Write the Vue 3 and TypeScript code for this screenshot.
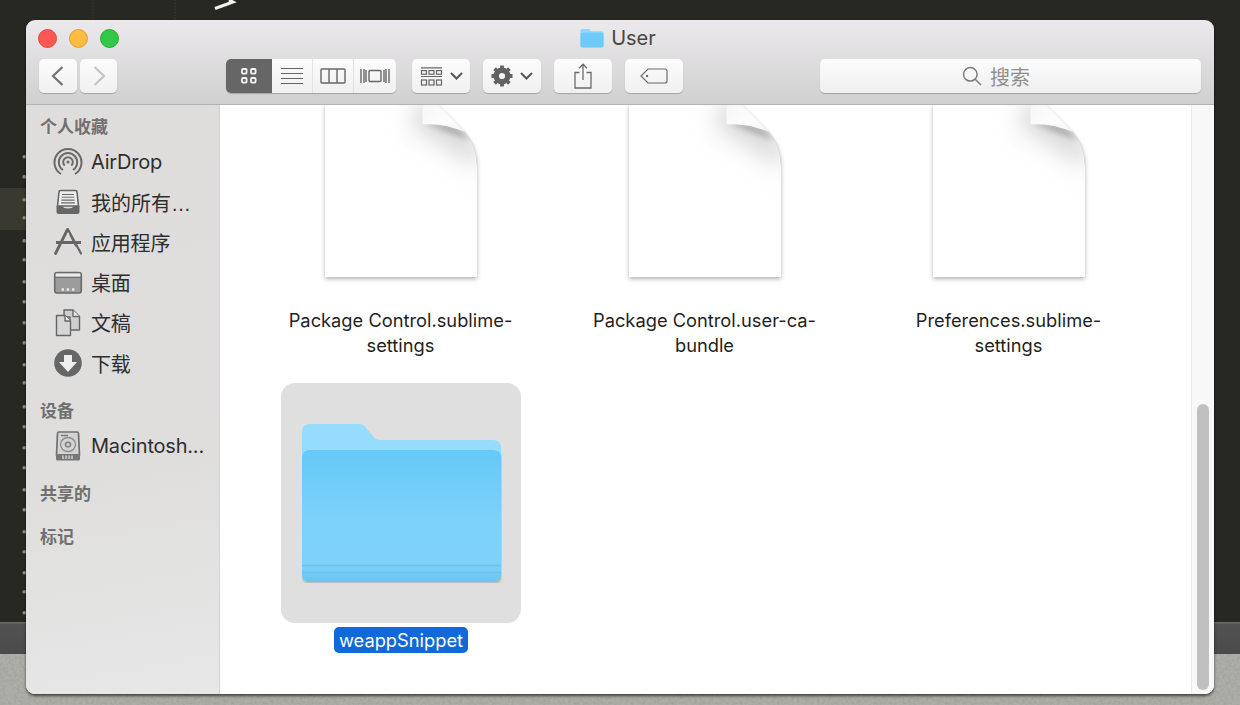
<script setup lang="ts">
const marks: number[] = [157,177,200,218,241,260,282,302,323,343,365,383,407,427,448,468,490,510,532,552,573,592,613]
const files: string[][] = [
  ['Package Control.sublime-', 'settings'],
  ['Package Control.user-ca-', 'bundle'],
  ['Preferences.sublime-', 'settings'],
]
</script>

<template>
  <div class="desktop">
    <div class="editor">
      <svg class="editor-art" width="300" height="622" viewBox="0 0 300 622">
        <rect x="0" y="188" width="26" height="42" fill="#39392f" />
        <path d="M93 0V20M175 0V20" stroke="#3e3e38" stroke-width="1" stroke-dasharray="1 2" />
        <path d="M215 8.500L233 2L229 0" fill="none" stroke="#f2f2ee" stroke-width="3" />
        <rect v-for="m in marks" :key="m" x="22.5" :y="m - 2" width="3.500" height="3.500" rx="1.500" fill="#8c8c86" />
      </svg>
    </div>
    <div class="band"></div>
    <div class="ground">
      <svg width="1240" height="51" viewBox="0 0 1240 51">
        <filter id="grain">
          <feTurbulence type="fractalNoise" baseFrequency="0.35" numOctaves="3" seed="4" />
          <feColorMatrix type="matrix" values="0 0 0 0 0.3  0 0 0 0 0.3  0 0 0 0 0.28  0 0 0 0.9 -0.3" />
        </filter>
        <rect width="1240" height="51" filter="url(#grain)" />
      </svg>
    </div>

    <div class="window">
      <header class="toolbar">
        <div class="titlebar">
          <div class="lights">
            <span class="light red"></span>
            <span class="light yellow"></span>
            <span class="light green"></span>
          </div>
          <div class="title">
            <svg width="24" height="20" viewBox="0 0 24 20">
              <path d="M0.500 2.500Q0.500 1 2 1H8.500Q9.500 1 10 2L11 3.300H22Q23.500 3.300 23.500 4.800V18Q23.500 19.500 22 19.500H2Q0.500 19.500 0.500 18Z" fill="#8fd8fd" />
              <path d="M0.500 6Q0.500 4.700 2 4.700H22Q23.500 4.700 23.500 6V18Q23.500 19.500 22 19.500H2Q0.500 19.500 0.500 18Z" fill="#6dcbf7" />
            </svg>
            <span>User</span>
          </div>
        </div>
        <div class="tools">
          <div class="btn back">
            <svg width="16" height="22" viewBox="0 0 16 22"><path d="M12.500 2L3 11L12.500 20" fill="none" stroke="#707070" stroke-width="2.200" /></svg>
          </div>
          <div class="btn forward">
            <svg width="16" height="22" viewBox="0 0 16 22"><path d="M3.500 2L13 11L3.500 20" fill="none" stroke="#c4c4c4" stroke-width="2.200" /></svg>
          </div>
          <div class="btn views">
            <div class="view active">
              <svg width="18" height="18" viewBox="0 0 18 18" fill="none" stroke="#f4f4f4" stroke-width="1.800">
                <rect x="2" y="2" width="4.600" height="4.600" rx="1" /><rect x="11" y="2" width="4.600" height="4.600" rx="1" />
                <rect x="2" y="11" width="4.600" height="4.600" rx="1" /><rect x="11" y="11" width="4.600" height="4.600" rx="1" />
              </svg>
            </div>
            <div class="view w41">
              <svg width="24" height="18" viewBox="0 0 24 18" stroke="#666" stroke-width="1.200"><path d="M1 1.500H23M1 6.500H23M1 11.500H23M1 16.500H23" /></svg>
            </div>
            <div class="view w41">
              <svg width="26" height="16" viewBox="0 0 26 16" fill="none" stroke="#666" stroke-width="1.400"><rect x="1" y="1" width="24" height="14" rx="1" /><path d="M9 1V15M17 1V15" /></svg>
            </div>
            <div class="view w42">
              <svg width="30" height="16" viewBox="0 0 30 16" fill="none" stroke="#666" stroke-width="1.400"><rect x="9" y="2.500" width="12" height="11" rx="1" /><path d="M1 1V15M4 1V15M26 1V15M29 1V15M6 2V14M24 2V14" /></svg>
            </div>
          </div>
          <div class="btn action arrange">
            <svg width="23" height="19" viewBox="0 0 23 19" fill="none" stroke="#666" stroke-width="1.200">
              <path d="M1 0.800H22M1 9.500H22" />
              <rect x="1.500" y="3.600" width="5" height="3.600" /><rect x="9" y="3.600" width="5" height="3.600" /><rect x="16.500" y="3.600" width="5" height="3.600" />
              <rect x="1.500" y="13" width="5" height="5" /><rect x="9" y="13" width="5" height="5" /><rect x="16.500" y="13" width="5" height="5" />
            </svg>
            <svg class="chev" width="13" height="8" viewBox="0 0 13 8"><path d="M1 1L6.500 6.500L12 1" fill="none" stroke="#555" stroke-width="2" /></svg>
          </div>
          <div class="btn action gear">
            <svg width="22" height="22" viewBox="0 0 22 22">
              <circle cx="11" cy="11" r="5.800" fill="none" stroke="#626262" stroke-width="5.400" />
              <g stroke="#626262" stroke-width="3.800">
                <path d="M11 0.500V4M11 18V21.500M0.500 11H4M18 11H21.500M3.600 3.600L6 6M16 16L18.400 18.400M18.400 3.600L16 6M6 16L3.600 18.400" />
              </g>
            </svg>
            <svg class="chev" width="13" height="8" viewBox="0 0 13 8"><path d="M1 1L6.500 6.500L12 1" fill="none" stroke="#555" stroke-width="2" /></svg>
          </div>
          <div class="btn action">
            <svg width="18" height="26" viewBox="0 0 18 26" fill="none" stroke="#6a6a6a" stroke-width="1.300">
              <path d="M5.500 9.500H1V25H17V9.500H12.500M9 17V1.500M5 5.200L9 1.200L13 5.200" />
            </svg>
          </div>
          <div class="btn action">
            <svg width="28" height="16" viewBox="0 0 28 16" fill="none" stroke="#6a6a6a" stroke-width="1.200">
              <path d="M8 1H25Q27 1 27 3V13Q27 15 25 15H8L1 8Z" /><circle cx="7" cy="8" r="1.200" fill="#6a6a6a" stroke="none" />
            </svg>
          </div>
          <div class="search">
            <svg width="20" height="20" viewBox="0 0 20 20" fill="none" stroke="#7c7c7c" stroke-width="1.500">
              <circle cx="8.300" cy="8.300" r="6.800" /><path d="M13.200 13.200L19 19" />
            </svg>
            <span>搜索</span>
          </div>
        </div>
      </header>

      <div class="body">
        <aside class="sidebar">
          <section class="group">
            <h3>个人收藏</h3>
            <div class="row">
              <svg class="ico" width="30" height="30" viewBox="0 0 30 30" fill="none" stroke="#6b6b6b" stroke-width="2">
                <path d="M8 27A13.500 13.500 0 1 1 22 27" />
                <path d="M10 23A9.200 9.200 0 1 1 20 23" />
                <path d="M11.800 18.600A4.800 4.800 0 1 1 18.200 18.600" />
                <circle cx="15" cy="15" r="1.600" fill="#6b6b6b" stroke="none" />
              </svg>
              <span>AirDrop</span>
            </div>
            <div class="row">
              <svg class="ico" width="30" height="30" viewBox="0 0 30 30">
                <path d="M6 5Q6 3.500 7.500 3.500H22.500Q24 3.500 24 5L25.500 19H4.500Z" fill="#ececec" stroke="#666" stroke-width="1.600" />
                <path d="M9 7.500H21M8.700 10.300H21.300M8.400 13.100H21.600M8 15.900H22" stroke="#6c6c6c" stroke-width="1.100" />
                <path d="M3.500 19H9.500Q10 21.500 15 21.500Q20 21.500 20.500 19H26.500V25Q26.500 27 24.500 27H5.500Q3.500 27 3.500 25Z" fill="#666" />
              </svg>
              <span class="ell">我的所有…</span>
            </div>
            <div class="row">
              <svg class="ico" width="30" height="30" viewBox="0 0 30 30" fill="none" stroke="#666" stroke-linecap="round">
                <path d="M15 2.500L28 26.500" stroke-width="2.200" />
                <path d="M14.500 2.500L2.500 26.500" stroke-width="2.800" />
                <path d="M15 2.500L10 12" stroke-width="1.400" />
                <path d="M3 15.500H28" stroke-width="3.200" stroke-linecap="butt" />
                <path d="M17 8L22.500 19" stroke-width="1.200" />
              </svg>
              <span>应用程序</span>
            </div>
            <div class="row">
              <svg class="ico" width="30" height="30" viewBox="0 0 30 30">
                <rect x="1.700" y="4.500" width="26.600" height="20.500" rx="2.500" fill="#9b9b9b" stroke="#6a6a6a" stroke-width="1.600" />
                <path d="M2.700 5.500H27.300V9H2.700Z" fill="#eaeaea" />
                <path d="M2 9.300H28" stroke="#6a6a6a" stroke-width="1.200" />
                <path d="M8.500 21.500H11M13.700 21.500H16.200M18.900 21.500H21.400" stroke="#e8e8e8" stroke-width="2.600" />
              </svg>
              <span>桌面</span>
            </div>
            <div class="row">
              <svg class="ico" width="30" height="30" viewBox="0 0 30 30" stroke="#666" stroke-width="1.400" stroke-linejoin="round">
                <path d="M11 2H20L26.500 8.500V22H17V9H11Z" fill="#cfcfcf" />
                <path d="M20 2V8.500H26.500" fill="#e8e8e8" />
                <path d="M3.500 7.500H12L17.500 13V27.500H3.500Z" fill="#d6d6d6" />
                <path d="M12 7.500V13H17.500" fill="#ececec" />
              </svg>
              <span>文稿</span>
            </div>
            <div class="row">
              <svg class="ico" width="30" height="30" viewBox="0 0 30 30">
                <circle cx="15" cy="15" r="13.800" fill="#666" />
                <path d="M11 7H19V14H24L15 24L6 14H11Z" fill="#efefef" />
              </svg>
              <span>下载</span>
            </div>
          </section>
          <section class="group">
            <h3>设备</h3>
            <div class="row">
              <svg class="ico" width="30" height="30" viewBox="0 0 30 30">
                <path d="M4.500 2.500Q4.500 1 6 1H24Q25.500 1 25.500 2.500L26.500 24H3.500Z" fill="#d3d3d3" stroke="#707070" stroke-width="1.700" />
                <ellipse cx="15" cy="13.500" rx="7.500" ry="7" fill="none" stroke="#8a8a8a" stroke-width="1.300" />
                <ellipse cx="15" cy="13.500" rx="2.600" ry="2.200" fill="none" stroke="#7c7c7c" stroke-width="1.400" />
                <path d="M8 4.500H15" stroke="#777" stroke-width="1.400" />
                <rect x="3" y="23" width="24" height="6.500" rx="1.500" fill="#777" />
                <path d="M10 24.500V28M13 24.500V28M16 24.500V28M19 24.500V28" stroke="#d8d8d8" stroke-width="1.400" />
              </svg>
              <span>Macintosh...</span>
            </div>
          </section>
          <section class="group"><h3>共享的</h3></section>
          <section class="group"><h3>标记</h3></section>
        </aside>

        <main class="content">
          <div class="grid">
            <div v-for="f in files" :key="f[0]" class="item">
              <svg class="doc" width="164" height="192" viewBox="319 104 164 192">
                <defs>
                  <linearGradient id="flap" x1="0" y1="0" x2="1" y2="1">
                    <stop offset="0" stop-color="#f6f6f6" />
                    <stop offset="0.6" stop-color="#fdfdfd" />
                    <stop offset="1" stop-color="#f2f2f2" />
                  </linearGradient>
                  <filter id="soft" x="-10%" y="-10%" width="120%" height="120%">
                    <feGaussianBlur stdDeviation="2" />
                  </filter>
                  <filter id="wide" x="-100%" y="-100%" width="300%" height="300%">
                    <feGaussianBlur stdDeviation="13" />
                  </filter>
                  <filter id="tight" x="-50%" y="-50%" width="200%" height="200%">
                    <feGaussianBlur stdDeviation="3" />
                  </filter>
                  <clipPath id="page">
                    <path d="M325 104H437L465 132Q477 146 477 165V277H325Z" />
                  </clipPath>
                </defs>
                <path d="M325 104H437L465 132Q477 146 477 165V277H325Z" fill="#000" fill-opacity="0.3" transform="translate(0 2)" filter="url(#soft)" />
                <path d="M325 104H437L465 132Q477 146 477 165V277H325Z" fill="#fff" />
                <g clip-path="url(#page)">
                  <path d="M415 104H445L480 140V170L440 140L415 130Z" fill="#c4c4c4" fill-opacity="0.75" filter="url(#wide)" />
                  <path d="M425 122Q448 123 462 132L470 140L440 128Z" fill="#9a9a9a" filter="url(#tight)" />
                </g>
                <path d="M422.500 104H437L465 132Q447 124.500 430 124.200H422.500Z" fill="url(#flap)" />
                <path d="M465 132Q477 146 477 165" fill="none" stroke="#dedede" stroke-width="1" />
              </svg>
              <div class="name"><div v-for="l in f" :key="l">{{ l }}</div></div>
            </div>
            <div class="item selected">
              <div class="sel">
                <svg class="folder" width="200" height="160" viewBox="0 0 200 160">
                  <defs>
                    <linearGradient id="front" x1="0" y1="0" x2="0" y2="1">
                      <stop offset="0" stop-color="#65c9f7" />
                      <stop offset="0.55" stop-color="#7dd2fb" />
                      <stop offset="0.85" stop-color="#7ed2fa" />
                      <stop offset="1" stop-color="#6bc6f0" />
                    </linearGradient>
                    <filter id="fs" x="-5%" y="-5%" width="110%" height="110%">
                      <feGaussianBlur stdDeviation="1.500" />
                    </filter>
                  </defs>
                  <rect x="1" y="30" width="198" height="130" rx="5" fill="#555" fill-opacity="0.4" filter="url(#fs)" />
                  <path d="M0 9Q0 1 8 1H57Q62 1 65 6L70 12Q73 17 79 17H191Q199 17 199 25V60H0Z" fill="#96dcff" />
                  <path d="M0 35Q0 27 8 27H191Q199 27 199 35V152Q199 158 193 158H6Q0 158 0 152Z" fill="url(#front)" />
                  <path d="M0 142.500H199M0 149.500H199" stroke="#6cc3ec" stroke-width="1.600" />
                </svg>
              </div>
              <div class="pill">weappSnippet</div>
            </div>
          </div>
        </main>

        <div class="track"><div class="thumb"></div></div>
      </div>
    </div>
  </div>
</template>

<style>
html, body { margin: 0; background: #272822; }
</style>

<style scoped>
.desktop {
  position: relative;
  width: 1240px;
  height: 705px;
  overflow: hidden;
  display: flex;
  flex-direction: column;
  font-family: Inter, "Noto Sans CJK SC", sans-serif;
}
.editor { height: 622px; background: #272822; }
.editor-art { display: block; }
.band {
  height: 32px;
  background: linear-gradient(#6a6a6a 0, #6a6a6a 1px, #525252 2px, #4a4a4a 100%);
}
.ground { flex: 1; background: #aeaea8; overflow: hidden; }
.ground svg { display: block; }

.window {
  position: absolute;
  left: 26px;
  top: 20px;
  width: 1188px;
  height: 674px;
  border-radius: 9px;
  overflow: hidden;
  display: flex;
  flex-direction: column;
  box-shadow: 0 2px 3px rgba(0, 0, 0, 0.6);
}
.toolbar {
  height: 85px;
  box-sizing: border-box;
  flex: none;
  background: linear-gradient(#ebe9eb, #d1d0d1);
  border-bottom: 1px solid #b3b3b3;
}
.titlebar {
  height: 37px;
  margin-bottom: 2px;
  display: grid;
  grid-template-columns: 1fr auto 1fr;
  align-items: center;
}
.lights { display: flex; gap: 12px; padding-left: 12px; }
.light { width: 19px; height: 19px; border-radius: 50%; box-sizing: border-box; }
.red { background: #fc5753; border: 1px solid #e5443f; }
.yellow { background: #fdbc40; border: 1px solid #e0a02f; }
.green { background: #33c748; border: 1px solid #27aa35; }
.title {
  display: flex;
  align-items: center;
  gap: 7px;
  font-size: 20px;
  color: #474747;
  margin-right: 4px;
  margin-bottom: 1px;
}
.tools { display: flex; align-items: stretch; height: 34px; padding-left: 13px; }
.btn {
  display: flex;
  align-items: center;
  justify-content: center;
  box-sizing: border-box;
  border-radius: 5px;
  background: linear-gradient(#fcfcfc, #f0f0f0);
  box-shadow: 0 1px 1px rgba(0, 0, 0, 0.22);
}
.back { width: 38px; margin-right: 3px; }
.forward { width: 37px; margin-right: 109px; }
.views { width: 170px; justify-content: flex-start; overflow: hidden; margin-right: 16px; }
.view { height: 100%; display: flex; align-items: center; justify-content: center; box-sizing: border-box; }
.view.active { width: 46px; background: #666; }
.w41 { width: 41px; border-right: 1px solid #e2e2e2; }
.w42 { width: 42px; }
.action { width: 58px; margin-right: 13px; }
.arrange, .gear { gap: 7px; }
.search {
  margin-left: auto;
  margin-right: 13px;
  width: 381px;
  box-sizing: border-box;
  padding-right: 29px;
  display: flex;
  align-items: center;
  justify-content: center;
  gap: 8px;
  border-radius: 5px;
  background: linear-gradient(#fcfcfc, #efefef);
  box-shadow: 0 1px 1px rgba(0, 0, 0, 0.22);
  color: #8f8f8f;
  font-size: 20px;
}

.body { flex: 1; display: flex; min-height: 0; background: #fff; }
.sidebar {
  width: 194px;
  flex: none;
  box-sizing: border-box;
  padding-top: 9px;
  background: linear-gradient(170deg, #dfdcdc, #dfdedd 60%, #e7e7e7);
  border-right: 1px solid #d2d2d2;
  display: flex;
  flex-direction: column;
  gap: 15px;
}
.group h3 {
  margin: 0 0 4px;
  height: 24px;
  line-height: 26px;
  padding-left: 14px;
  font-size: 17px;
  font-weight: 700;
  color: #716f6f;
}
.row {
  height: 40.2px;
  display: flex;
  align-items: center;
  padding-left: 27px;
  gap: 8px;
  color: #2e2e2e;
  white-space: nowrap;
}
.row span { font-size: 20px; letter-spacing: -0.2px; }
.row .ell { font-family: "Liberation Sans", "Noto Sans CJK SC", sans-serif; letter-spacing: 0; }
.ico { flex: none; }

.content { flex: 1; overflow: hidden; padding-left: 29px; }
.grid {
  display: grid;
  grid-template-columns: repeat(3, 304px);
  row-gap: 25px;
}
.item { display: flex; flex-direction: column; align-items: center; }
.doc { display: block; margin-top: -1px; }
.name {
  margin-top: 12px;
  margin-right: 1px;
  font-size: 18.3px;
  line-height: 25px;
  color: #1f1f1f;
  text-align: center;
  white-space: nowrap;
}
.sel {
  width: 240px;
  height: 240px;
  border-radius: 14px;
  background: #dfdfdf;
  display: flex;
  align-items: center;
  justify-content: center;
}
.folder { margin-left: 1px; }
.pill {
  margin-top: 4px;
  height: 26px;
  line-height: 26px;
  padding: 0 5px;
  border-radius: 5px;
  background: #1169d9;
  color: #fff;
  font-size: 18.3px;
}
.track {
  width: 23px;
  flex: none;
  box-sizing: border-box;
  background: #f8f8f8;
  border-left: 1px solid #ebebeb;
  padding: 299px 5px 4px 5px;
  display: flex;
}
.thumb { flex: 1; border-radius: 6px; background: #c0c0c0; }
</style>
